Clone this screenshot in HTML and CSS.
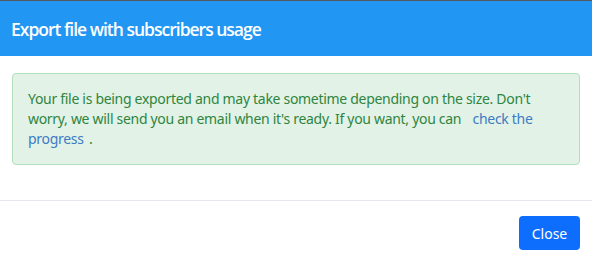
FILE: index.html
```html
<!DOCTYPE html>
<html>
<head>
<meta charset="utf-8">
<link rel="stylesheet" href="styles.css">
</head>
<body>
<div class="backdrop"></div>
<div class="modal">
  <div class="modal-header">
    <h5 class="modal-title">Export file with subscribers usage</h5>
  </div>
  <div class="modal-body">
    <p class="alert">Your file is being exported and may take sometime depending on the size. Don't worry, we will send you an email when it's ready. If you want, you can <a class="link link-start" href="#">check the</a> <a class="link link-end" href="#">progress</a> <span class="dot">.</span></p>
  </div>
  <div class="modal-footer">
    <button class="btn">Close</button>
  </div>
</div>
</body>
</html>
```
FILE: styles.css
```css
html, body {
  margin: 0;
  padding: 0;
  background: #ffffff;
}
body {
  width: 592px;
  height: 262px;
  overflow: hidden;
  font-family: "Noto Sans", sans-serif;
}
.backdrop {
  height: 1px;
  background: #55585c;
}
.modal {
  background: #ffffff;
}
.modal-header {
  background: #2196f3;
  height: 55px;
  display: flex;
  align-items: center;
  padding: 0 11px;
}
.modal-title {
  margin: 0;
  color: #ffffff;
  font-family: "Open Sans", sans-serif;
  font-weight: 600;
  font-size: 17.5px;
  letter-spacing: -1px;
}
.modal-body {
  padding: 17px 12px 35px 12px;
}
.alert {
  margin: 0;
  background: #e3f2e7;
  border: 1px solid #b3dfbd;
  border-radius: 4px;
  color: #2e8540;
  font-size: 14px;
  letter-spacing: -0.3px;
  line-height: 20px;
  padding: 15px 15px 16px 15px;
  height: 59px;
}
.link {
  color: #3c7cc4;
  text-decoration: none;
}
.link-start {
  margin-left: 8px;
}
.dot {
  margin-left: 2px;
}
.modal-footer {
  border-top: 1px solid #e6e6ef;
  display: flex;
  justify-content: flex-end;
  padding: 15px 12px;
}
.btn {
  background: #0d6efd;
  color: #ffffff;
  border: none;
  border-radius: 4px;
  width: 61px;
  height: 34px;
  font-family: "Noto Sans", sans-serif;
  font-size: 14px;
  padding: 0;
}
```
